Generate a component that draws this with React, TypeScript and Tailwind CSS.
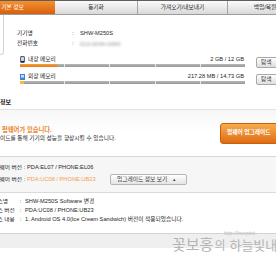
import React from "react";

const Bar = ({ fill, color }: { fill: number; color: string }) => (
  <div className="relative flex h-[3px] gap-[1px] bg-[#e8e8e8]">
    {[0, 1, 2, 3, 4].map((i) => (
      <div key={i} className="flex-1 bg-gradient-to-b from-[#b8b8b8] to-[#989898]" />
    ))}
    <div className={`absolute left-0 top-0 h-full ${color}`} style={{ width: fill }} />
  </div>
);

const PhoneIcon = () => (
  <svg width="5" height="7" viewBox="0 0 5 7" className="shrink-0">
    <rect x="0.3" y="0.3" width="4.4" height="6.4" rx="0.8" fill="#1d2740" />
    <rect x="1.1" y="1.1" width="2.8" height="3.8" fill="#d6e6f8" />
  </svg>
);

const CardIcon = () => (
  <svg width="5" height="6" viewBox="0 0 5 6" className="shrink-0">
    <rect x="0" y="0" width="5" height="6" fill="#3f7fd8" />
    <rect x="1" y="1" width="3" height="2.6" fill="#c4dcf7" />
  </svg>
);

const SmallButton = ({ children }: { children: React.ReactNode }) => (
  <div className="ml-[11px] mt-[2px] flex h-[11px] w-[32px] shrink-0 items-center rounded-[2px] border border-[#a9a9a9] bg-gradient-to-b from-[#ffffff] to-[#dedede] pl-[4px] text-[#333]">
    {children}
  </div>
);

export default function App() {
  return (
    <div className="relative h-[260px] w-[276px] overflow-hidden bg-white font-['Liberation_Sans','Noto_Sans_CJK_KR',sans-serif] text-[5.7px] leading-none text-[#262626]">
      {/* tab bar */}
      <div className="flex h-[15px] overflow-hidden border-b border-t border-b-[#9c9c9c] border-t-[#5e5e5e] bg-gradient-to-b from-[#fbfbfb] to-[#d9d9d9]">
        <div className="-ml-[30px] flex w-[85px] shrink-0 items-center justify-center bg-gradient-to-b from-[#f5912f] to-[#d65f0b] text-white">
          기본 정보
        </div>
        <div className="flex w-[83px] shrink-0 items-center justify-center border-r border-[#a5a5a5]">동기화</div>
        <div className="flex w-[90px] shrink-0 items-center justify-center border-r border-[#a5a5a5]">
          가져오기/내보내기
        </div>
        <div className="flex w-[74px] shrink-0 items-center justify-center">백업/복원</div>
      </div>

      {/* device info */}
      <div className="flex">
        <div className="h-[40px] w-[4px] shrink-0 rounded-br-[3px] border-b border-r border-[#d4d4d4]" />
        <div className="min-w-0 flex-1 pl-[13px] pt-[14px]">
          <div className="flex h-[10px] items-center">
            <span className="w-[55px] shrink-0">기기명</span>
            <span className="w-[8px] shrink-0">:</span>
            <span>SHW-M250S</span>
          </div>
          <div className="flex h-[10px] items-center">
            <span className="w-[55px] shrink-0">전화번호</span>
            <span className="w-[8px] shrink-0">:</span>
            <span className="text-[6px] text-[#9a9a9a] blur-[1.2px]">010-0000-0000</span>
          </div>

          <div className="ml-[3px] mt-[6px] flex h-[17px] items-start">
            <div className="w-[225px] shrink-0">
              <div className="flex h-[9px] items-center">
                <PhoneIcon />
                <span className="ml-[3px]">내장 메모리</span>
                <span className="ml-auto pr-[1px]">2 GB / 12 GB</span>
              </div>
              <Bar fill={37} color="bg-gradient-to-b from-[#f6a040] to-[#e67a12]" />
            </div>
            <SmallButton>탐색</SmallButton>
          </div>
          <div className="ml-[3px] flex h-[17px] items-start">
            <div className="w-[225px] shrink-0">
              <div className="flex h-[9px] items-center">
                <CardIcon />
                <span className="ml-[3px]">외장 메모리</span>
                <span className="ml-auto pr-[1px]">217.28 MB / 14.73 GB</span>
              </div>
              <Bar fill={4} color="bg-[#f2c232]" />
            </div>
            <SmallButton>탐색</SmallButton>
          </div>
        </div>
      </div>

      {/* section heading */}
      <div className="mt-[8px] flex h-[10px] items-center text-[6px] font-bold text-[#1a1a1a]">정보</div>

      {/* firmware notice */}
      <div className="mt-[2px] flex h-[48px] items-center border-b border-t border-b-[#d8d8d8] border-t-[#e2e2e2] bg-gradient-to-b from-[#f7f7f7] via-[#ffffff] to-[#ffffff]">
        <div className="flex flex-col pt-[2px]">
          <div className="flex h-[9px] items-center pl-[2px] text-[6.3px] font-bold text-[#e8882c]">펌웨어가 있습니다.</div>
          <div className="flex h-[7px] items-center">이드를 통해 기기의 성능을 향상시킬 수 있습니다.</div>
        </div>
        <div className="-mr-[6px] ml-auto flex h-[21px] w-[62px] shrink-0 items-center rounded-[3px] border border-[#c4600e] bg-gradient-to-b from-[#f8ab4e] to-[#de6c0c] pl-[6px] font-bold text-white">
          펌웨어 업그레이드
        </div>
      </div>

      {/* versions */}
      <div className="h-[36px] border-b border-[#dadada] bg-[#f6f6f6] pt-[6px]">
        <div className="flex h-[10px] items-center">
          <div className="flex w-[22px] shrink-0 justify-end overflow-hidden whitespace-nowrap">현재 펌웨어 버전</div>
          <span className="w-[5px] shrink-0 text-center">:</span>
          <span>PDA:EL07 / PHONE:EL06</span>
        </div>
        <div className="mt-[1px] flex h-[11px] items-center">
          <div className="flex w-[22px] shrink-0 justify-end overflow-hidden whitespace-nowrap">최신 펌웨어 버전</div>
          <span className="w-[5px] shrink-0 text-center">:</span>
          <span className="w-[83px] shrink-0 text-[#f2a050]">PDA:UC08 / PHONE:UB23</span>
          <div className="flex h-[11px] w-[77px] shrink-0 items-center rounded-[2px] border border-[#b5b5b5] bg-gradient-to-b from-[#ffffff] to-[#e4e4e4] pl-[6px] text-[#333]">
            <span>업그레이드 정보 보기</span>
            <span className="ml-[5px] text-[4px]">▲</span>
          </div>
        </div>
      </div>

      {/* release info */}
      <div className="h-[40px] pt-[4px]">
        <div className="flex h-[9px] items-center">
          <div className="w-[18px] shrink-0 overflow-hidden whitespace-nowrap">
            <span className="-ml-[13px] inline-block">릴리스명</span>
          </div>
          <span className="w-[5px] shrink-0 text-center">:</span>
          <span className="ml-[2px]">SHW-M250S Software 변경</span>
        </div>
        <div className="flex h-[9px] items-center">
          <div className="w-[18px] shrink-0 overflow-hidden whitespace-nowrap">
            <span className="-ml-[13px] inline-block">릴리스 버전</span>
          </div>
          <span className="w-[5px] shrink-0 text-center">:</span>
          <span className="ml-[2px]">PDA:UC08 / PHONE:UB23</span>
        </div>
        <div className="flex h-[9px] items-center">
          <div className="w-[18px] shrink-0 overflow-hidden whitespace-nowrap">
            <span className="-ml-[13px] inline-block">릴리스 내용</span>
          </div>
          <span className="w-[5px] shrink-0 text-center">:</span>
          <span className="ml-[2px] whitespace-nowrap">1. Android OS 4.0(Ice Cream Sandwich) 버전이 적용되었습니다.</span>
        </div>
      </div>

      {/* bottom band */}
      <div className="h-[15px] border-t border-[#d3d3d3] bg-[#efefef]" />

      {/* watermark overlay */}
      <div className="pointer-events-none absolute left-[224px] top-[231px] whitespace-nowrap text-[5px] italic text-[#bdbdbd]">
        http://linerpink.
      </div>
      <div className="pointer-events-none absolute left-[172px] top-[236px] flex items-end whitespace-nowrap font-['Noto_Sans_CJK_KR',sans-serif] text-[#b4b4b4]">
        <span className="text-[15px] leading-none">꽃보홍</span>
        <span className="ml-[1px] text-[12px] leading-none">의</span>
        <span className="ml-[4px] text-[13px] leading-none">하늘빛내</span>
      </div>
    </div>
  );
}
